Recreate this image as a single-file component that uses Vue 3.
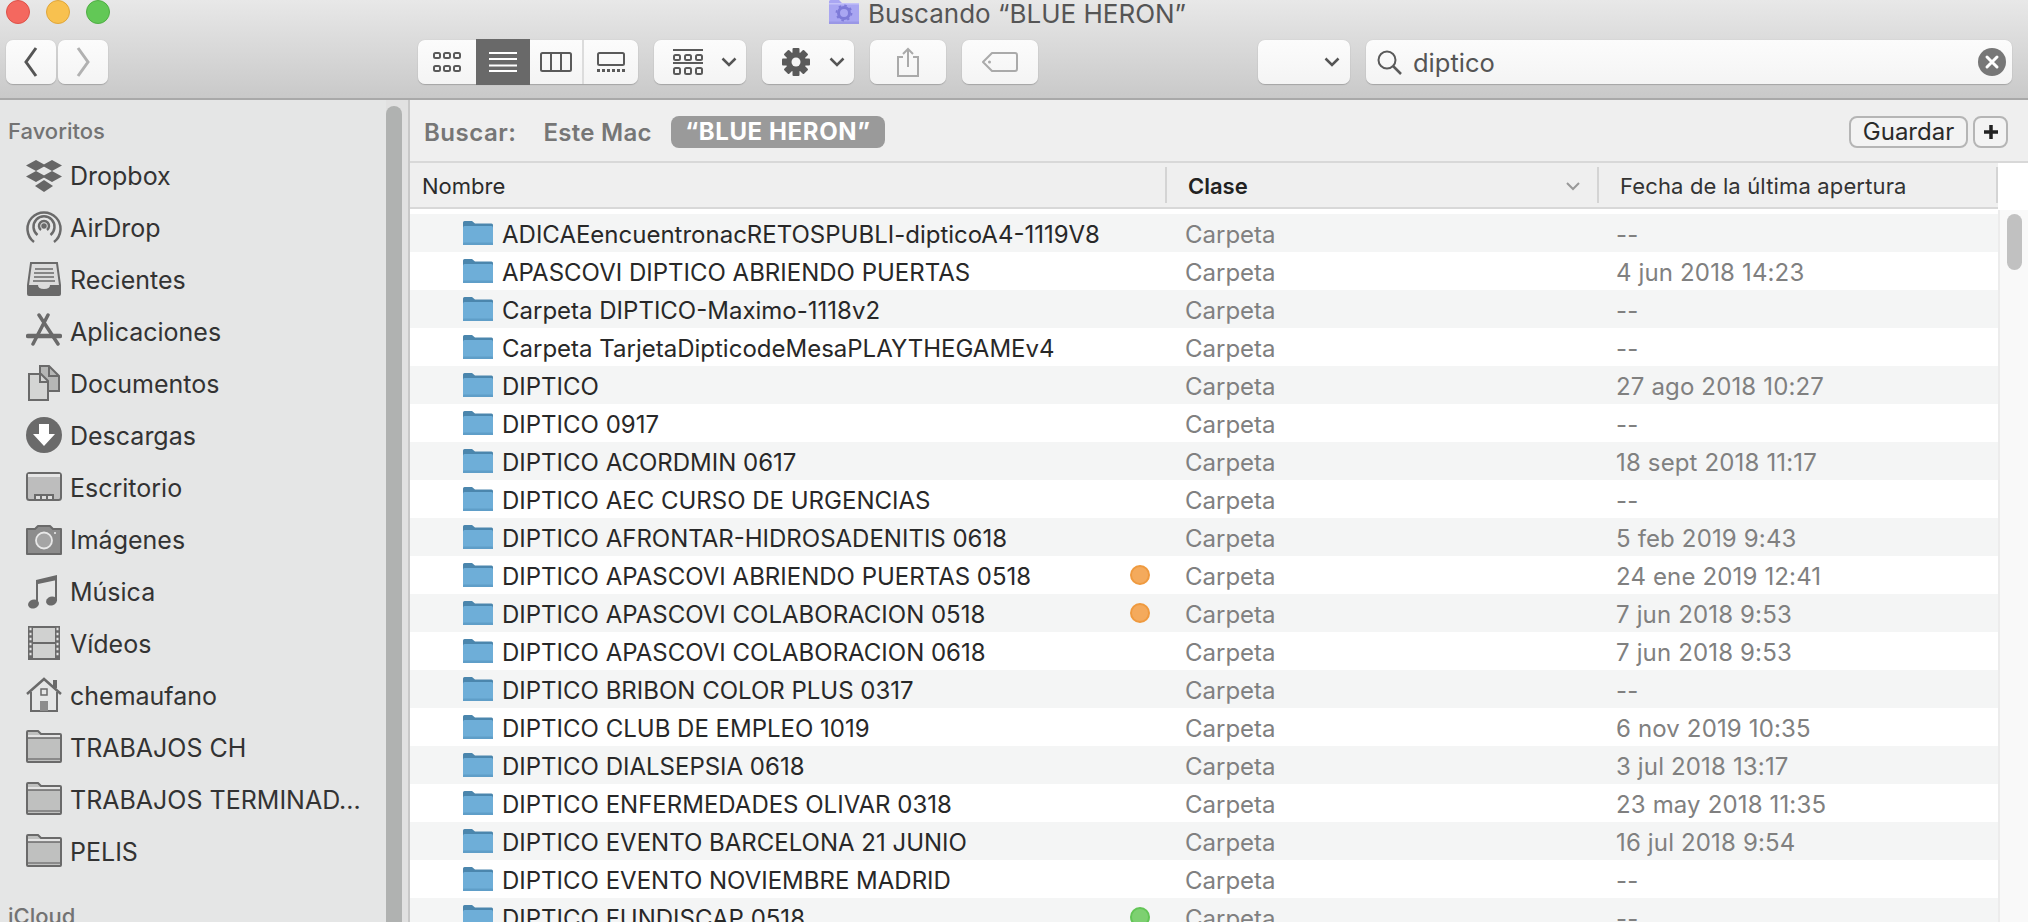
<script setup>
const favorites = [
  { label: 'Dropbox', icon: 'dropbox' },
  { label: 'AirDrop', icon: 'airdrop' },
  { label: 'Recientes', icon: 'recents' },
  { label: 'Aplicaciones', icon: 'apps' },
  { label: 'Documentos', icon: 'docs' },
  { label: 'Descargas', icon: 'downloads' },
  { label: 'Escritorio', icon: 'desktop' },
  { label: 'Imágenes', icon: 'camera' },
  { label: 'Música', icon: 'music' },
  { label: 'Vídeos', icon: 'film' },
  { label: 'chemaufano', icon: 'home' },
  { label: 'TRABAJOS CH', icon: 'folder' },
  { label: 'TRABAJOS TERMINAD...', icon: 'folder' },
  { label: 'PELIS', icon: 'folder' },
]
const rows = [
  ['ADICAEencuentronacRETOSPUBLI-dipticoA4-1119V8', '--'],
  ['APASCOVI DIPTICO ABRIENDO PUERTAS', '4 jun 2018 14:23'],
  ['Carpeta DIPTICO-Maximo-1118v2', '--'],
  ['Carpeta TarjetaDipticodeMesaPLAYTHEGAMEv4', '--'],
  ['DIPTICO', '27 ago 2018 10:27'],
  ['DIPTICO 0917', '--'],
  ['DIPTICO ACORDMIN 0617', '18 sept 2018 11:17'],
  ['DIPTICO AEC CURSO DE URGENCIAS', '--'],
  ['DIPTICO AFRONTAR-HIDROSADENITIS 0618', '5 feb 2019 9:43'],
  ['DIPTICO APASCOVI ABRIENDO PUERTAS 0518', '24 ene 2019 12:41', 'orange'],
  ['DIPTICO APASCOVI COLABORACION 0518', '7 jun 2018 9:53', 'orange'],
  ['DIPTICO APASCOVI COLABORACION 0618', '7 jun 2018 9:53'],
  ['DIPTICO BRIBON COLOR PLUS 0317', '--'],
  ['DIPTICO CLUB DE EMPLEO 1019', '6 nov 2019 10:35'],
  ['DIPTICO DIALSEPSIA 0618', '3 jul 2018 13:17'],
  ['DIPTICO ENFERMEDADES OLIVAR 0318', '23 may 2018 11:35'],
  ['DIPTICO EVENTO BARCELONA 21 JUNIO', '16 jul 2018 9:54'],
  ['DIPTICO EVENTO NOVIEMBRE MADRID', '--'],
  ['DIPTICO FUNDISCAP 0518', '--', 'green'],
]
</script>

<template>
  <div class="window">
    <header class="toolbar">
      <div class="lights">
        <span class="light red"></span>
        <span class="light yellow"></span>
        <span class="light green"></span>
      </div>
      <div class="title">
        <svg class="title-icon" width="30" height="24" viewBox="0 0 30 24">
          <path d="M0 24V1.5Q0 0 1.5 0H10L13 3H28.500Q30 3 30 4.500V24Z" fill="#a9a6f2" />
          <rect x="0" y="3" width="30" height="1.500" fill="#c4c2f8" />
          <rect x="0" y="21.500" width="30" height="2.500" fill="#9a97e6" />
          <circle cx="15" cy="13" r="5.500" fill="none" stroke="#7d7ad8" stroke-width="3" />
          <circle cx="15" cy="13" r="7.500" fill="none" stroke="#7d7ad8" stroke-width="1.800" stroke-dasharray="2.500 3.400" />
        </svg>
        <span>Buscando “BLUE HERON”</span>
      </div>
      <div class="tools">
        <button class="btn nav">
          <svg width="14" height="32" viewBox="0 0 14 32"><path d="M12 2 2 16l10 14" fill="none" stroke="#555" stroke-width="3" /></svg>
        </button>
        <button class="btn nav forward">
          <svg width="14" height="32" viewBox="0 0 14 32"><path d="M2 2l10 14L2 30" fill="none" stroke="#b1b1b1" stroke-width="3" /></svg>
        </button>
        <div class="btn views">
          <span class="view v-icons">
            <svg width="28" height="20" viewBox="0 0 28 20" fill="none" stroke="#5a5a5a" stroke-width="2">
              <rect x="1" y="1" width="6" height="5" rx="1.500" /><rect x="11" y="1" width="6" height="5" rx="1.500" /><rect x="21" y="1" width="6" height="5" rx="1.500" />
              <rect x="1" y="14" width="6" height="5" rx="1.500" /><rect x="11" y="14" width="6" height="5" rx="1.500" /><rect x="21" y="14" width="6" height="5" rx="1.500" />
            </svg>
          </span>
          <span class="view v-list">
            <svg width="28" height="20" viewBox="0 0 28 20" fill="#fff">
              <rect y="0" width="28" height="2" /><rect y="6" width="28" height="2" /><rect y="12.500" width="28" height="2" /><rect y="18" width="28" height="2" />
            </svg>
          </span>
          <span class="view v-cols">
            <svg width="32" height="20" viewBox="0 0 32 20" fill="none" stroke="#5a5a5a" stroke-width="2">
              <rect x="1" y="1" width="30" height="18" rx="1.500" /><path d="M11 1v18M21 1v18" />
            </svg>
          </span>
          <span class="view v-gallery">
            <svg width="28" height="20" viewBox="0 0 28 20">
              <rect x="1" y="1" width="26" height="12" rx="1.500" fill="none" stroke="#5a5a5a" stroke-width="2" />
              <path d="M0 17h3v3H0zM5 17h3v3H5zM10 17h3v3h-3zM15 17h3v3h-3zM20 17h3v3h-3zM25 17h3v3h-3z" fill="#5a5a5a" />
            </svg>
          </span>
        </div>
        <button class="btn group">
          <svg width="30" height="26" viewBox="0 0 30 26" fill="none" stroke="#5a5a5a" stroke-width="2">
            <path d="M0 1h30M0 14h30" />
            <rect x="1" y="6" width="6" height="5" rx="1.500" /><rect x="12" y="6" width="6" height="5" rx="1.500" /><rect x="23" y="6" width="6" height="5" rx="1.500" />
            <rect x="1" y="19" width="6" height="6" rx="1.500" /><rect x="12" y="19" width="6" height="6" rx="1.500" /><rect x="23" y="19" width="6" height="6" rx="1.500" />
          </svg>
          <svg class="chev" width="16" height="10" viewBox="0 0 16 10"><path d="M1.500 1.500 8 8l6.500-6.500" fill="none" stroke="#555" stroke-width="2.500" /></svg>
        </button>
        <button class="btn action">
          <svg width="28" height="28" viewBox="0 0 28 28">
            <g fill="#5a5a5a">
              <rect x="10.500" y="0" width="7" height="28" rx="1" />
              <rect x="10.500" y="0" width="7" height="28" rx="1" transform="rotate(45 14 14)" />
              <rect x="10.500" y="0" width="7" height="28" rx="1" transform="rotate(90 14 14)" />
              <rect x="10.500" y="0" width="7" height="28" rx="1" transform="rotate(135 14 14)" />
              <circle cx="14" cy="14" r="10" />
            </g>
            <circle cx="14" cy="14" r="4.500" fill="#f5f5f5" />
          </svg>
          <svg class="chev" width="16" height="10" viewBox="0 0 16 10"><path d="M1.500 1.500 8 8l6.500-6.500" fill="none" stroke="#555" stroke-width="2.500" /></svg>
        </button>
        <button class="btn share">
          <svg width="24" height="30" viewBox="0 0 24 30" fill="none" stroke="#aaa" stroke-width="2">
            <path d="M7 10H2v19h20V10h-5M12 20V2M7 7l5-5 5 5" />
          </svg>
        </button>
        <button class="btn tag">
          <svg width="36" height="20" viewBox="0 0 36 20" fill="none" stroke="#aaa" stroke-width="2">
            <path d="M10 1h23q2 0 2 2v14q0 2-2 2H10L1 10z" stroke-linejoin="round" /><circle cx="7.500" cy="10" r="1.500" fill="#aaa" stroke="none" />
          </svg>
        </button>
        <button class="btn scope">
          <svg width="16" height="10" viewBox="0 0 16 10"><path d="M1.500 1.500 8 8l6.500-6.500" fill="none" stroke="#555" stroke-width="2.500" /></svg>
        </button>
        <div class="btn search">
          <svg width="25" height="25" viewBox="0 0 25 25" fill="none" stroke="#5a5a5a" stroke-width="2">
            <circle cx="10" cy="10" r="8.500" /><path d="M16 16l8 8" stroke-width="2.500" />
          </svg>
          <span class="query">diptico</span>
          <svg class="clear" width="28" height="28" viewBox="0 0 28 28">
            <circle cx="14" cy="14" r="14" fill="#777" />
            <path d="M9 9l10 10M19 9 9 19" stroke="#fff" stroke-width="3" stroke-linecap="round" />
          </svg>
        </div>
      </div>
    </header>

    <div class="body">
      <aside class="sidebar">
        <nav class="nav-list">
          <h3 class="section">Favoritos</h3>
          <div v-for="f in favorites" :key="f.label" class="side-item">
            <svg class="side-icon" width="36" height="36" viewBox="0 0 36 36">
              <g v-if="f.icon === 'dropbox'" fill="#666">
                <path d="M10 3l10 5.500L10 14 0 8.500zM26 3l10 5.500L26 14 16 8.500zM10 14l10 5.500L10 25 0 19.500zM26 14l10 5.500L26 25l-10-5.500z" />
                <path d="M18 24l9 6-9 6-9-6z" transform="translate(0 -1)" />
              </g>
              <g v-else-if="f.icon === 'airdrop'" fill="none" stroke="#6a6a6a" stroke-width="2.500">
                <path d="M8 33A16.500 16.500 0 1 1 28 33" />
                <path d="M11.500 26A10.500 10.500 0 1 1 24.500 26" />
                <path d="M15 21A5 5 0 1 1 21 21" />
                <circle cx="18" cy="17" r="1.500" fill="#6a6a6a" />
              </g>
              <g v-else-if="f.icon === 'recents'">
                <path d="M5 2h26l3 22v9q0 1-1 1H3q-1 0-1-1v-9z" fill="#dcdcdc" stroke="#6a6a6a" stroke-width="2" />
                <path d="M9 8h18M8 12h20M8 16h20M7 20h22" stroke="#6a6a6a" stroke-width="1.600" />
                <path d="M2 24h10q0 4 6 4t6-4h10v8q0 2-2 2H4q-2 0-2-2z" fill="#6a6a6a" />
              </g>
              <g v-else-if="f.icon === 'apps'" stroke="#6a6a6a" fill="none" stroke-linecap="round">
                <path d="M13 2l19 29M22 2 7 31" stroke-width="3.500" />
                <path d="M2 23h32" stroke-width="4.500" />
              </g>
              <g v-else-if="f.icon === 'docs'" stroke="#6a6a6a" stroke-width="2">
                <path d="M14 1h9l10 10v15H14z" fill="#b5b6b5" />
                <path d="M23 1v10h10" fill="none" />
                <path d="M3 9h12l7 7v19H3z" fill="#d4d5d4" />
                <path d="M14 9v8h8" fill="none" />
              </g>
              <g v-else-if="f.icon === 'downloads'">
                <circle cx="18" cy="18" r="18" fill="#6a6a6a" />
                <path d="M13 7h10v10h6L18 29 7 17h6z" fill="#fff" />
              </g>
              <g v-else-if="f.icon === 'desktop'">
                <rect x="1" y="4" width="34" height="27" rx="2.500" fill="#bdbdbd" stroke="#6a6a6a" stroke-width="2" />
                <rect x="2" y="5" width="32" height="3" fill="#e6e6e6" />
                <path d="M8 31v-6h20v6z" fill="#6a6a6a" />
                <path d="M10 27h4v3h-4zM16 27h4v3h-4zM22 27h4v3h-4z" fill="#ddd" />
              </g>
              <g v-else-if="f.icon === 'camera'">
                <path d="M1 8h8l3-3h12l3 3h8v25H1z" fill="#8c8c8c" stroke="#6a6a6a" stroke-width="2" stroke-linejoin="round" />
                <circle cx="18" cy="19.500" r="8" fill="#a5a5a5" stroke="#e8e8e8" stroke-width="1.800" />
                <circle cx="29" cy="12" r="1" fill="#eee" />
              </g>
              <g v-else-if="f.icon === 'music'" fill="#6a6a6a">
                <path d="M10 7 31 2v5L12 11v19H10zM29 4h2v24h-2z" />
                <ellipse cx="7.500" cy="31" rx="5.500" ry="4.500" transform="rotate(-18 7.500 31)" />
                <ellipse cx="25.500" cy="28" rx="5.500" ry="4.500" transform="rotate(-18 25.500 28)" />
              </g>
              <g v-else-if="f.icon === 'film'">
                <rect x="2" y="1" width="32" height="34" fill="#6a6a6a" />
                <rect x="7" y="3" width="22" height="14" fill="#d0d1d0" />
                <rect x="7" y="19" width="22" height="14" fill="#d0d1d0" />
                <path d="M3.500 4h2M3.500 9h2M3.500 14h2M3.500 19h2M3.500 24h2M3.500 29h2M30.500 4h2M30.500 9h2M30.500 14h2M30.500 19h2M30.500 24h2M30.500 29h2" stroke="#e4e4e4" stroke-width="2.500" />
              </g>
              <g v-else-if="f.icon === 'home'">
                <path d="M5 15v19h26V15" fill="#e5e6e6" stroke="#6a6a6a" stroke-width="2" />
                <path d="M1 17 18 2l17 15" fill="none" stroke="#6a6a6a" stroke-width="2.500" />
                <rect x="27" y="3" width="4" height="8" fill="#6a6a6a" />
                <rect x="15" y="12" width="6" height="6" fill="none" stroke="#6a6a6a" stroke-width="1.500" />
                <rect x="14" y="24" width="8" height="10" fill="#8c8c8c" />
              </g>
              <g v-else>
                <path d="M1 32V3q0-1 1-1h10l3 3h19q1 0 1 1v26q0 1-1 1H2q-1 0-1-1z" fill="#bfc0bf" stroke="#6a6a6a" stroke-width="2" />
                <path d="M2 9V6h32v3z" fill="#e4e4e4" />
                <path d="M2 9h32" stroke="#6a6a6a" stroke-width="1.500" />
                <path d="M2 30h32" stroke="#8a8a8a" stroke-width="2" />
              </g>
            </svg>
            <span class="side-label">{{ f.label }}</span>
          </div>
          <h3 class="section icloud">iCloud</h3>
        </nav>
        <div class="side-track"><div class="side-thumb"></div></div>
      </aside>

      <main class="main">
        <div class="scope-bar">
          <span class="scope-label">Buscar:</span>
          <span class="scope-label mac">Este Mac</span>
          <span class="pill">“BLUE HERON”</span>
          <button class="small-btn save">Guardar</button>
          <button class="small-btn plus">
            <svg width="16" height="16" viewBox="0 0 16 16"><path d="M8 1v14M1 8h14" stroke="#222" stroke-width="3.500" /></svg>
          </button>
        </div>
        <div class="content">
          <div class="table">
            <div class="head">
              <div class="hcell h-name">Nombre</div>
              <div class="hcell h-kind">
                <b>Clase</b>
                <svg width="14" height="9" viewBox="0 0 14 9"><path d="M1 1l6 6 6-6" fill="none" stroke="#999" stroke-width="2" /></svg>
              </div>
              <div class="hcell h-date">Fecha de la última apertura</div>
            </div>
            <div class="rows">
              <div v-for="(r, i) in rows" :key="r[0]" class="row" :class="{ alt: i % 2 === 0 }">
                <div class="c-name">
                  <svg class="folder" width="30" height="24" viewBox="0 0 30 24">
                    <path d="M0 24V1.500Q0 0 1.500 0H9L12 2.500H28.500Q30 2.500 30 4V24Z" fill="#4b86ad" />
                    <rect x="0" y="5" width="30" height="19" rx="1.500" fill="#6eaed8" />
                    <rect x="0" y="21.500" width="30" height="2.500" rx="1" fill="#5f9ec8" />
                  </svg>
                  <span class="name">{{ r[0] }}</span>
                  <span v-if="r[2]" class="dot" :class="r[2]"></span>
                </div>
                <div class="c-kind">Carpeta</div>
                <div class="c-date">{{ r[1] }}</div>
              </div>
            </div>
          </div>
          <div class="gutter"><div class="thumb"></div></div>
        </div>
      </main>
    </div>
  </div>
</template>

<style>
html, body { margin: 0; background: #fff; overflow: hidden; }
</style>

<style scoped>
.window {
  width: 2028px;
  height: 922px;
  overflow: hidden;
  display: flex;
  flex-direction: column;
  font-family: Inter, "Liberation Sans", sans-serif;
  color: #2b2b2b;
}
.toolbar {
  height: 98px;
  flex: none;
  background: linear-gradient(#e8e8e8, #c9c9c9);
  border-bottom: 2px solid #a9a9a9;
  display: flex;
  flex-direction: column;
  position: relative;
}
.lights {
  position: absolute;
  left: 6px;
  top: 0;
  display: flex;
  gap: 16px;
}
.light {
  width: 24px;
  height: 24px;
  border-radius: 50%;
  box-sizing: border-box;
  border: 1px solid;
}
.red { background: #f4685f; border-color: #de5148; }
.yellow { background: #f8c14f; border-color: #e0a63a; }
.green { background: #62c856; border-color: #4fae44; }
.title {
  height: 40px;
  padding-left: 829px;
  display: flex;
  align-items: flex-start;
  flex: none;
  font-size: 26px;
  line-height: 27px;
  color: #555;
  gap: 9px;
}
.tools { display: flex; height: 44px; padding-left: 6px; }
.btn {
  box-sizing: border-box;
  height: 44px;
  border: 0;
  padding: 0;
  border-radius: 7px;
  background: linear-gradient(#fcfcfc, #f4f4f4);
  box-shadow: 0 1px 1px #a5a5a5, 0 0 1px #b9b9b9;
  display: flex;
  align-items: center;
  flex: none;
}
.nav { width: 50px; justify-content: center; }
.forward { margin-left: 2px; }
.views { width: 220px; margin-left: 310px; position: relative; }
.view { height: 44px; display: flex; align-items: center; justify-content: center; flex: none; }
.v-icons { width: 58px; }
.v-list { width: 54px; height: 46px; background: #696969; }
.v-cols { width: 52px; border-right: 2px solid #dcdcdc; box-sizing: content-box; }
.v-gallery { flex: 1; }
.group { width: 92px; margin-left: 16px; padding-left: 19px; }
.action { width: 92px; margin-left: 16px; padding-left: 20px; }
.chev { margin-left: 18px; }
.action .chev { margin-left: 19px; }
.share { width: 76px; margin-left: 16px; justify-content: center; }
.tag { width: 76px; margin-left: 16px; justify-content: center; }
.scope { width: 92px; margin-left: 220px; padding-left: 66px; }
.search { width: 646px; margin-left: 16px; padding-left: 11px; }
.query { font-size: 25.5px; color: #555; margin-left: 11px; flex: 1; }
.clear { margin-right: 6px; }

.body { flex: 1; display: flex; min-height: 0; }
.sidebar {
  width: 410px;
  flex: none;
  display: flex;
  background: #e5e6e6;
  box-sizing: border-box;
  border-right: 2px solid #c8c8c8;
}
.nav-list { flex: 1; min-width: 0; overflow: hidden; }
.section {
  margin: 0;
  padding: 19px 0 0 8px;
  font-size: 22px;
  line-height: 24px;
  font-weight: 500;
  color: #737373;
}
.section + .side-item { margin-top: 6px; }
.side-item {
  height: 52px;
  display: flex;
  align-items: center;
  padding-left: 26px;
}
.side-icon { flex: none; }
.side-label { margin-left: 8px; padding-top: 1px; font-size: 25px; color: #333; white-space: nowrap; }
.section.icloud { padding-top: 27px; }
.side-track { width: 22px; flex: none; background: #e1e1e1; }
.side-thumb {
  width: 16px;
  height: 900px;
  margin-top: 6px;
  background: #b0b2b1;
  border-radius: 8px 8px 0 0;
}

.main { flex: 1; min-width: 0; display: flex; flex-direction: column; background: #fff; }
.scope-bar {
  height: 63px;
  flex: none;
  box-sizing: border-box;
  background: #efefef;
  border-bottom: 2px solid #d8d8d8;
  display: flex;
  align-items: center;
  padding-left: 14px;
  padding-top: 3px;
}
.scope-label { font-size: 24px; font-weight: 600; color: #767676; white-space: nowrap; letter-spacing: 0.5px; }
.mac { margin-left: 27px; letter-spacing: 0.3px; }
.pill {
  margin-left: 19px;
  height: 32px;
  width: 214px;
  box-sizing: border-box;
  background: #9a9a9a;
  color: #fff;
  border-radius: 8px;
  font-size: 24px;
  font-weight: 700;
  line-height: 32px;
  letter-spacing: 0.6px;
  text-align: center;
  white-space: nowrap;
}
.small-btn {
  height: 32px;
  box-sizing: border-box;
  border: 2px solid #b5b5b5;
  border-radius: 8px;
  background: #f3f3f3;
  font: 400 24px/28px Inter, "Liberation Sans", sans-serif;
  color: #2a2a2a;
  padding: 0;
  display: flex;
  align-items: center;
  justify-content: center;
}
.save { width: 119px; margin-left: auto; }
.plus { width: 35px; margin-left: 5px; margin-right: 20px; }
.content { flex: 1; display: flex; min-height: 0; }
.table { width: 1588px; flex: none; display: flex; flex-direction: column; min-height: 0; }
.head {
  height: 46px;
  flex: none;
  box-sizing: border-box;
  background: #efefef;
  border-bottom: 2px solid #d8d8d8;
  display: grid;
  grid-template-columns: 755px 432px 1fr;
  align-items: center;
  font-size: 22px;
}
.hcell { height: 36px; display: flex; align-items: center; box-sizing: border-box; color: #2b2b2b; white-space: nowrap; padding-top: 2px; }
.h-name { padding-left: 12px; }
.h-kind { border-left: 2px solid #d4d4d4; padding-left: 21px; }
.h-kind b { font-weight: 600; flex: 1; color: #222; }
.h-kind svg { margin-right: 17px; }
.h-date { border-left: 2px solid #d4d4d4; border-right: 2px solid #d4d4d4; padding-left: 21px; color: #333; letter-spacing: 0.15px; }
.rows { margin-top: 5px; overflow: hidden; flex: 1; }
.row {
  height: 38px;
  display: grid;
  grid-template-columns: 775px 431px 1fr;
  align-items: center;
  background: #fff;
}
.row.alt { background: #f4f5f5; }
.c-name { display: flex; align-items: center; padding-left: 53px; padding-right: 35px; }
.folder { flex: none; }
.name { margin-left: 9px; flex: 1; font-size: 24px; color: #282828; white-space: nowrap; padding-top: 2px; }
.dot { width: 20px; height: 20px; border-radius: 50%; box-sizing: border-box; border: 2px solid; flex: none; }
.dot.orange { background: #f4aa5c; border-color: #ef9a3f; }
.dot.green { background: #7dd071; border-color: #62c556; }
.c-kind, .c-date { font-size: 24px; color: #808080; white-space: nowrap; padding-top: 2px; }
.c-date { letter-spacing: 0.15px; }
.gutter { flex: 1; border-left: 2px solid #ececec; margin-top: 47px; background: #f9f9f9; }
.thumb { width: 15px; height: 56px; margin: 4px 0 0 7px; background: #c1c1c1; border-radius: 8px; }
</style>
